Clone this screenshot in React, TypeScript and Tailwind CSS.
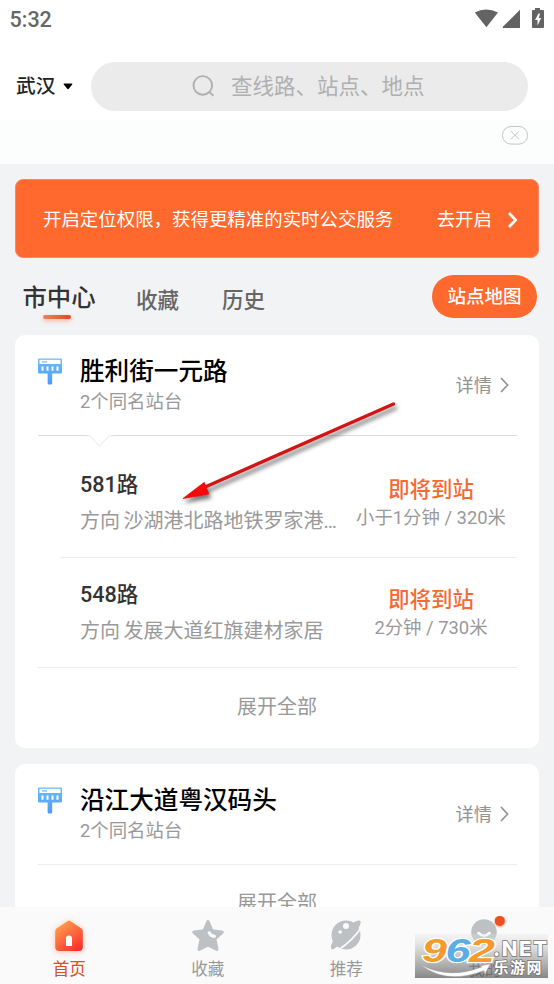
import type { ReactNode } from 'react'

const stops = [
  {
    name: '胜利街一元路',
    lines: [
      { name: '581路', to: '沙湖港北路地铁罗家港…', eta: '小于1分钟 / 320米' },
      { name: '548路', to: '发展大道红旗建材家居', eta: '2分钟 / 730米' },
    ],
  },
  { name: '沿江大道粤汉码头', lines: [] },
]

function StatusBar() {
  return (
    <div className="h-[38px] pl-[9.5px] pr-[9px] flex items-center justify-between">
      <span className="pt-0.5 text-[21.5px] leading-[38px] font-medium text-[#666]">5:32</span>
      <svg width="71" height="22" viewBox="0 0 71 22" fill="#636363">
        <path d="M0.8 4.6Q12 -1.4 24 4.6L12.4 19.2Z" />
        <path d="M46 1.8V20H28.8V18.8Z" />
        <path
          fillRule="evenodd"
          d="M61 0H66V2H69Q70 2 70 3V19Q70 20 69 20H59Q58 20 58 19V3Q58 2 59 2H61ZM64.5 5.5L61 12H63.5V17.5L67.2 10H64.8L66 5.5Z"
        />
      </svg>
    </div>
  )
}

function Header() {
  return (
    <header className="h-[164px] shrink-0 bg-white">
      <StatusBar />
      <div className="h-[82px] pt-[14px] pl-4 pr-[26px] flex items-center">
        <span className="w-10 pt-0.5 text-[19.7px] leading-7 text-[#222] font-medium">武汉</span>
        <svg className="ml-[7px]" width="10" height="7" viewBox="0 0 10 7">
          <path d="M1 0.5H9Q9.8 0.8 9.2 1.6L5.8 5.8Q5 6.6 4.2 5.8L0.8 1.6Q0.2 0.8 1 0.5Z" />
        </svg>
        <div className="ml-[18px] h-[49px] flex-1 rounded-full bg-[#ebebeb] flex items-center pl-[101px]">
          <svg width="23" height="22" viewBox="0 0 23 22" fill="none" stroke="#b0b0b0" strokeWidth="1.9">
            <circle cx="10.8" cy="10.4" r="9.3" />
            <path d="M17 16.6L21.4 20.8" />
          </svg>
          <span className="ml-4 pt-0.5 text-[21.5px] leading-7 text-[#b0b0b0] whitespace-nowrap">查线路、站点、地点</span>
        </div>
      </div>
      <div className="h-[44px] bg-[#fcfefe] flex justify-end pr-[26px] pt-[6px]">
        <svg width="26" height="19" viewBox="0 0 26 19" fill="none" stroke="#c4c6c6" strokeWidth="1">
          <rect x="0.5" y="0.5" width="25" height="17.6" rx="8.5" />
          <path d="M9 5.2L17 13.2M17 5.2L9 13.2" />
        </svg>
      </div>
    </header>
  )
}

function Tabs() {
  return (
    <div className="h-[77px] pl-[7px] pr-[2px] flex items-start">
      <div className="w-[74px] pt-[23px] flex flex-col items-center">
        <span className="text-[24.4px] leading-[34px] font-medium text-[#333] whitespace-nowrap">市中心</span>
        <span className="-ml-[4px] h-[4px] w-7 rounded-full bg-linear-to-r from-[#ee805f] to-[#dd4a20] shadow-[0_2px_4px_#f8b7a2]" />
      </div>
      <span className="ml-[40px] pt-[27px] w-11 text-[21.5px] leading-8 font-medium text-[#666]">收藏</span>
      <span className="ml-[42px] pt-[27px] w-11 text-[21.5px] leading-8 font-medium text-[#666]">历史</span>
      <button className="ml-auto mt-[17px] pt-[3px] h-[43px] w-[105px] rounded-full bg-[#ff692d] text-[18.5px] font-medium text-white">
        站点地图
      </button>
    </div>
  )
}

function StopIcon() {
  return (
    <svg className="mt-[23px]" width="24" height="27" viewBox="0 0 24 27">
      <defs>
        <linearGradient id="sign" x1="0" y1="0" x2="0" y2="1">
          <stop offset="0" stopColor="#6dbdf3" />
          <stop offset="1" stopColor="#4c9bff" />
        </linearGradient>
      </defs>
      <path fill="url(#sign)" d="M1 0.5H23Q24 0.5 24 1.5V14Q24 15.5 22.5 15.5H14.2V25Q14.2 26.5 12.8 26.5H11Q9.6 26.5 9.6 25V15.5H1.5Q0 15.5 0 14V1.5Q0 0.5 1 0.5Z" />
      <path fill="#fff" d="M1.5 1.8H22.5V6H1.5Z" />
      <path fill="#7cc4f8" d="M4 3.2H9V4.6H4Z" />
      <path stroke="#fff" strokeWidth="2" d="M4.5 8.5V12.8M9.5 8.5V12.8M14.5 8.5V12.8M19.5 8.5V12.8" />
    </svg>
  )
}

function Chevron({ className, width }: { className: string; width: number }) {
  return (
    <svg className={className} width="9" height="16" viewBox="0 0 9 16" fill="none" stroke="currentColor" strokeWidth={width}>
      <path d="M1 1L7.6 8L1 15" />
    </svg>
  )
}

function Stop({ name, children, notch }: { name: string; children?: ReactNode; notch?: boolean }) {
  return (
    <section className="rounded-[10px] bg-white pl-[23px] pr-[22px]">
      <div className="h-[100px] flex">
        <StopIcon />
        <div className="ml-[18px] pt-5 flex-1">
          <h2 className="text-[24.6px] leading-[34px] font-medium text-black">{name}</h2>
          <p className="text-[18.4px] leading-[26px] text-[#999]">2个同名站台</p>
        </div>
        <div className="h-full pr-2 flex items-center text-[18.2px] text-[#929292]">
          <span className="pt-0.5">详情</span>
          <Chevron className="ml-2" width={1.7} />
        </div>
      </div>
      {notch ? (
        <svg className="block" width="479" height="14" viewBox="0 0 479 14" fill="none">
          <path d="M0 0.5H50M73 0.5H479" stroke="#dcdcdc" />
          <path d="M48 0.8H52L61.5 11.2L71 0.8H76" stroke="#e6e6e6" strokeWidth="1" />
        </svg>
      ) : (
        <div className="h-px bg-[#ececec]" />
      )}
      {children}
    </section>
  )
}

function Line({ line }: { line: (typeof stops)[0]['lines'][0] }) {
  return (
    <div className="flex pl-[42px] whitespace-nowrap">
      <div className="w-[262px] shrink-0 pt-px">
        <h3 className="text-[21.6px] leading-[30px] font-medium text-[#333]">{line.name}</h3>
        <p className="mt-[6px] text-[20px] leading-[30px] text-[#999] [word-spacing:-1.5px]">方向 {line.to}</p>
      </div>
      <div className="w-[178px] shrink-0 pt-[7px] text-center">
        <p className="text-[21.4px] leading-7 font-medium text-[#f56a33]">即将到站</p>
        <p className="text-[18.4px] leading-7 text-[#999]">{line.eta}</p>
      </div>
    </div>
  )
}

function Arrow() {
  return (
    <svg className="absolute left-[170px] top-[390px] pointer-events-none drop-shadow-[2px_4px_2px_#0008]" width="240" height="120" viewBox="0 0 240 120">
      <path d="M223.5 14L34 97.5" stroke="#d41414" strokeWidth="3.4" strokeLinecap="round" />
      <path d="M13 108.5L34.3 92.3L38.8 104Z" fill="#fb0606" stroke="#e01010" strokeWidth="0.8" />
    </svg>
  )
}

function HomeIcon() {
  return (
    <svg className="drop-shadow-[0_1px_3px_#ff8a6a88]" width="32" height="33" viewBox="0 0 32 33">
      <defs>
        <linearGradient id="home" x1="0.2" y1="0" x2="0.9" y2="1">
          <stop offset="0" stopColor="#ffa350" />
          <stop offset="1" stopColor="#fb2a29" />
        </linearGradient>
      </defs>
      <g transform="translate(0 1)">
        <path fill="url(#home)" d="M14.7 0.9Q16 0 17.3 0.9L28.4 8.6Q29.8 9.6 29.8 11.4V27Q29.8 31 25.8 31H6.2Q2.2 31 2.2 27V11.4Q2.2 9.6 3.6 8.6Z" />
        <path fill="#fff" d="M13 26V18.5Q13 15.5 16 15.5T19 18.5V26Z" />
      </g>
    </svg>
  )
}

function StarIcon() {
  return (
    <svg width="34" height="34" viewBox="0 0 34 34">
      <path
        fill="#bdc1c4"
        stroke="#bdc1c4"
        strokeWidth="3.5"
        strokeLinejoin="round"
        d="M17 2.8L20.8 12L31 13.2L23.6 19.8L25.8 30.2L17 25.8L8.2 30.2L10.4 19.8L3 13.2L13.2 12Z"
      />
      <path fill="none" stroke="#fafafa" strokeWidth="3.2" strokeLinecap="round" d="M18.3 13.8Q19.6 17 23.4 17.3" />
    </svg>
  )
}

function PlanetIcon() {
  return (
    <svg width="32" height="32" viewBox="0 0 32 32" fill="#bdc1c4">
      <circle cx="16" cy="16" r="14.5" />
      <path d="M22 4.6Q28.5 0.2 30.4 2Q32 4.4 26 12.5L4 30Q1 31.2 1 29Q0.4 25.6 4.5 20Z" />
      <path fill="none" stroke="#fafafa" strokeWidth="1.8" d="M31 9Q23 21 8.5 31" />
      <circle cx="16" cy="7" r="3" fill="#fafafa" />
      <circle cx="10.2" cy="13" r="1.8" fill="#fafafa" />
    </svg>
  )
}

function MeIcon() {
  return (
    <svg className="overflow-visible" width="32" height="32" viewBox="0 0 32 32">
      <circle cx="15" cy="13" r="12.8" fill="#bdc1c4" />
      <path fill="none" stroke="#fff" strokeWidth="2.5" strokeLinecap="round" d="M9.5 14Q15 19.5 20.5 14" />
      <circle className="drop-shadow-[0_1px_1px_#e5987f]" cx="30.8" cy="1.9" r="5" fill="#ee4f1d" />
    </svg>
  )
}

const tabs = [
  { label: '首页', icon: <HomeIcon />, color: 'text-[#db4e20]' },
  { label: '收藏', icon: <StarIcon />, color: 'text-[#999]' },
  { label: '推荐', icon: <PlanetIcon />, color: 'text-[#999]' },
  { label: '我的', icon: <MeIcon />, color: 'text-[#555]' },
]

function Watermark() {
  return (
    <svg className="absolute right-[6px] bottom-[6px]" width="133" height="44" viewBox="0 0 133 44" overflow="visible">
      <defs>
        <linearGradient id="mark" x1="0" y1="0" x2="0" y2="1">
          <stop offset="0" stopColor="#e4e4e4" stopOpacity="0.3" />
          <stop offset="0.5" stopColor="#a8a8a8" stopOpacity="0.65" />
          <stop offset="1" stopColor="#6a6a6a" stopOpacity="0.8" />
        </linearGradient>
      </defs>
      <rect width="133" height="44" fill="url(#mark)" />
      <path d="M6 31Q34 46 67 33L65 32L75 30L70 40L69 36.5Q32 51 6 31Z" fill="#fff" stroke="#aaa" strokeWidth="0.4" />
      <g
        fontFamily="'Liberation Sans'"
        fontWeight="700"
        fontStyle="italic"
        fontSize="34"
        stroke="#fff"
        strokeWidth="2.4"
        paintOrder="stroke"
      >
        <text x="7" y="28" fill="#f59a2d" textLength="25" lengthAdjust="spacingAndGlyphs">9</text>
        <text x="30.5" y="28" fill="#58aee5" textLength="25" lengthAdjust="spacingAndGlyphs">6</text>
        <text x="54" y="28" fill="#f59a2d" textLength="26" lengthAdjust="spacingAndGlyphs">2</text>
      </g>
      <g fill="#fff" stroke="#777" strokeWidth="1.6" paintOrder="stroke">
        <text x="78" y="22" fontFamily="Inter" fontWeight="800" fontSize="20.5" textLength="54">.NET</text>
        <text x="78.5" y="39" fontFamily="'Noto Sans CJK SC'" fontWeight="700" fontSize="15" textLength="48">乐游网</text>
      </g>
    </svg>
  )
}

function BottomNav() {
  return (
    <nav className="relative h-[77px] shrink-0 bg-[#fafafa] grid grid-cols-4">
      {tabs.map((tab) => (
        <div key={tab.label} className="flex flex-col items-center">
          <div className="h-[50px] pt-[12px]">{tab.icon}</div>
          <span className={`text-[16.6px] leading-[26px] ${tab.color}`}>{tab.label}</span>
        </div>
      ))}
      <Watermark />
    </nav>
  )
}

export default function App() {
  return (
    <div className="relative h-[984px] w-[554px] overflow-hidden bg-[#f1f3f5] flex flex-col font-[Roboto,'Noto_Sans_CJK_SC',sans-serif]">
      <Header />
      <main className="flex-1 min-h-0 overflow-hidden px-[15px] pt-[15px]">
        <div className="h-[79px] rounded-lg bg-[#ff692d] border border-[#f58b62] pl-[27px] pr-[21px] flex items-center text-[18.45px] text-white whitespace-nowrap">
          <span className="pt-1">开启定位权限，获得更精准的实时公交服务</span>
          <span className="ml-auto pt-1">去开启</span>
          <Chevron className="ml-4 mt-0.5" width={2.7} />
        </div>
        <Tabs />
        <Stop name={stops[0].name} notch>
          <div className="pt-5 h-[108px]">
            <Line line={stops[0].lines[0]} />
          </div>
          <div className="ml-[23px] h-px bg-[#ececec]" />
          <div className="pt-[21px] h-[109px]">
            <Line line={stops[0].lines[1]} />
          </div>
          <div className="h-px bg-[#ececec]" />
          <div className="h-[80px] pt-6 pr-px text-center text-[20px] leading-[30px] text-[#999]">展开全部</div>
        </Stop>
        <div className="h-4" />
        <Stop name={stops[1].name}>
          <div className="h-[80px] pt-[23px] pr-px text-center text-[20px] leading-[30px] text-[#999]">展开全部</div>
        </Stop>
      </main>
      <BottomNav />
      <Arrow />
    </div>
  )
}
